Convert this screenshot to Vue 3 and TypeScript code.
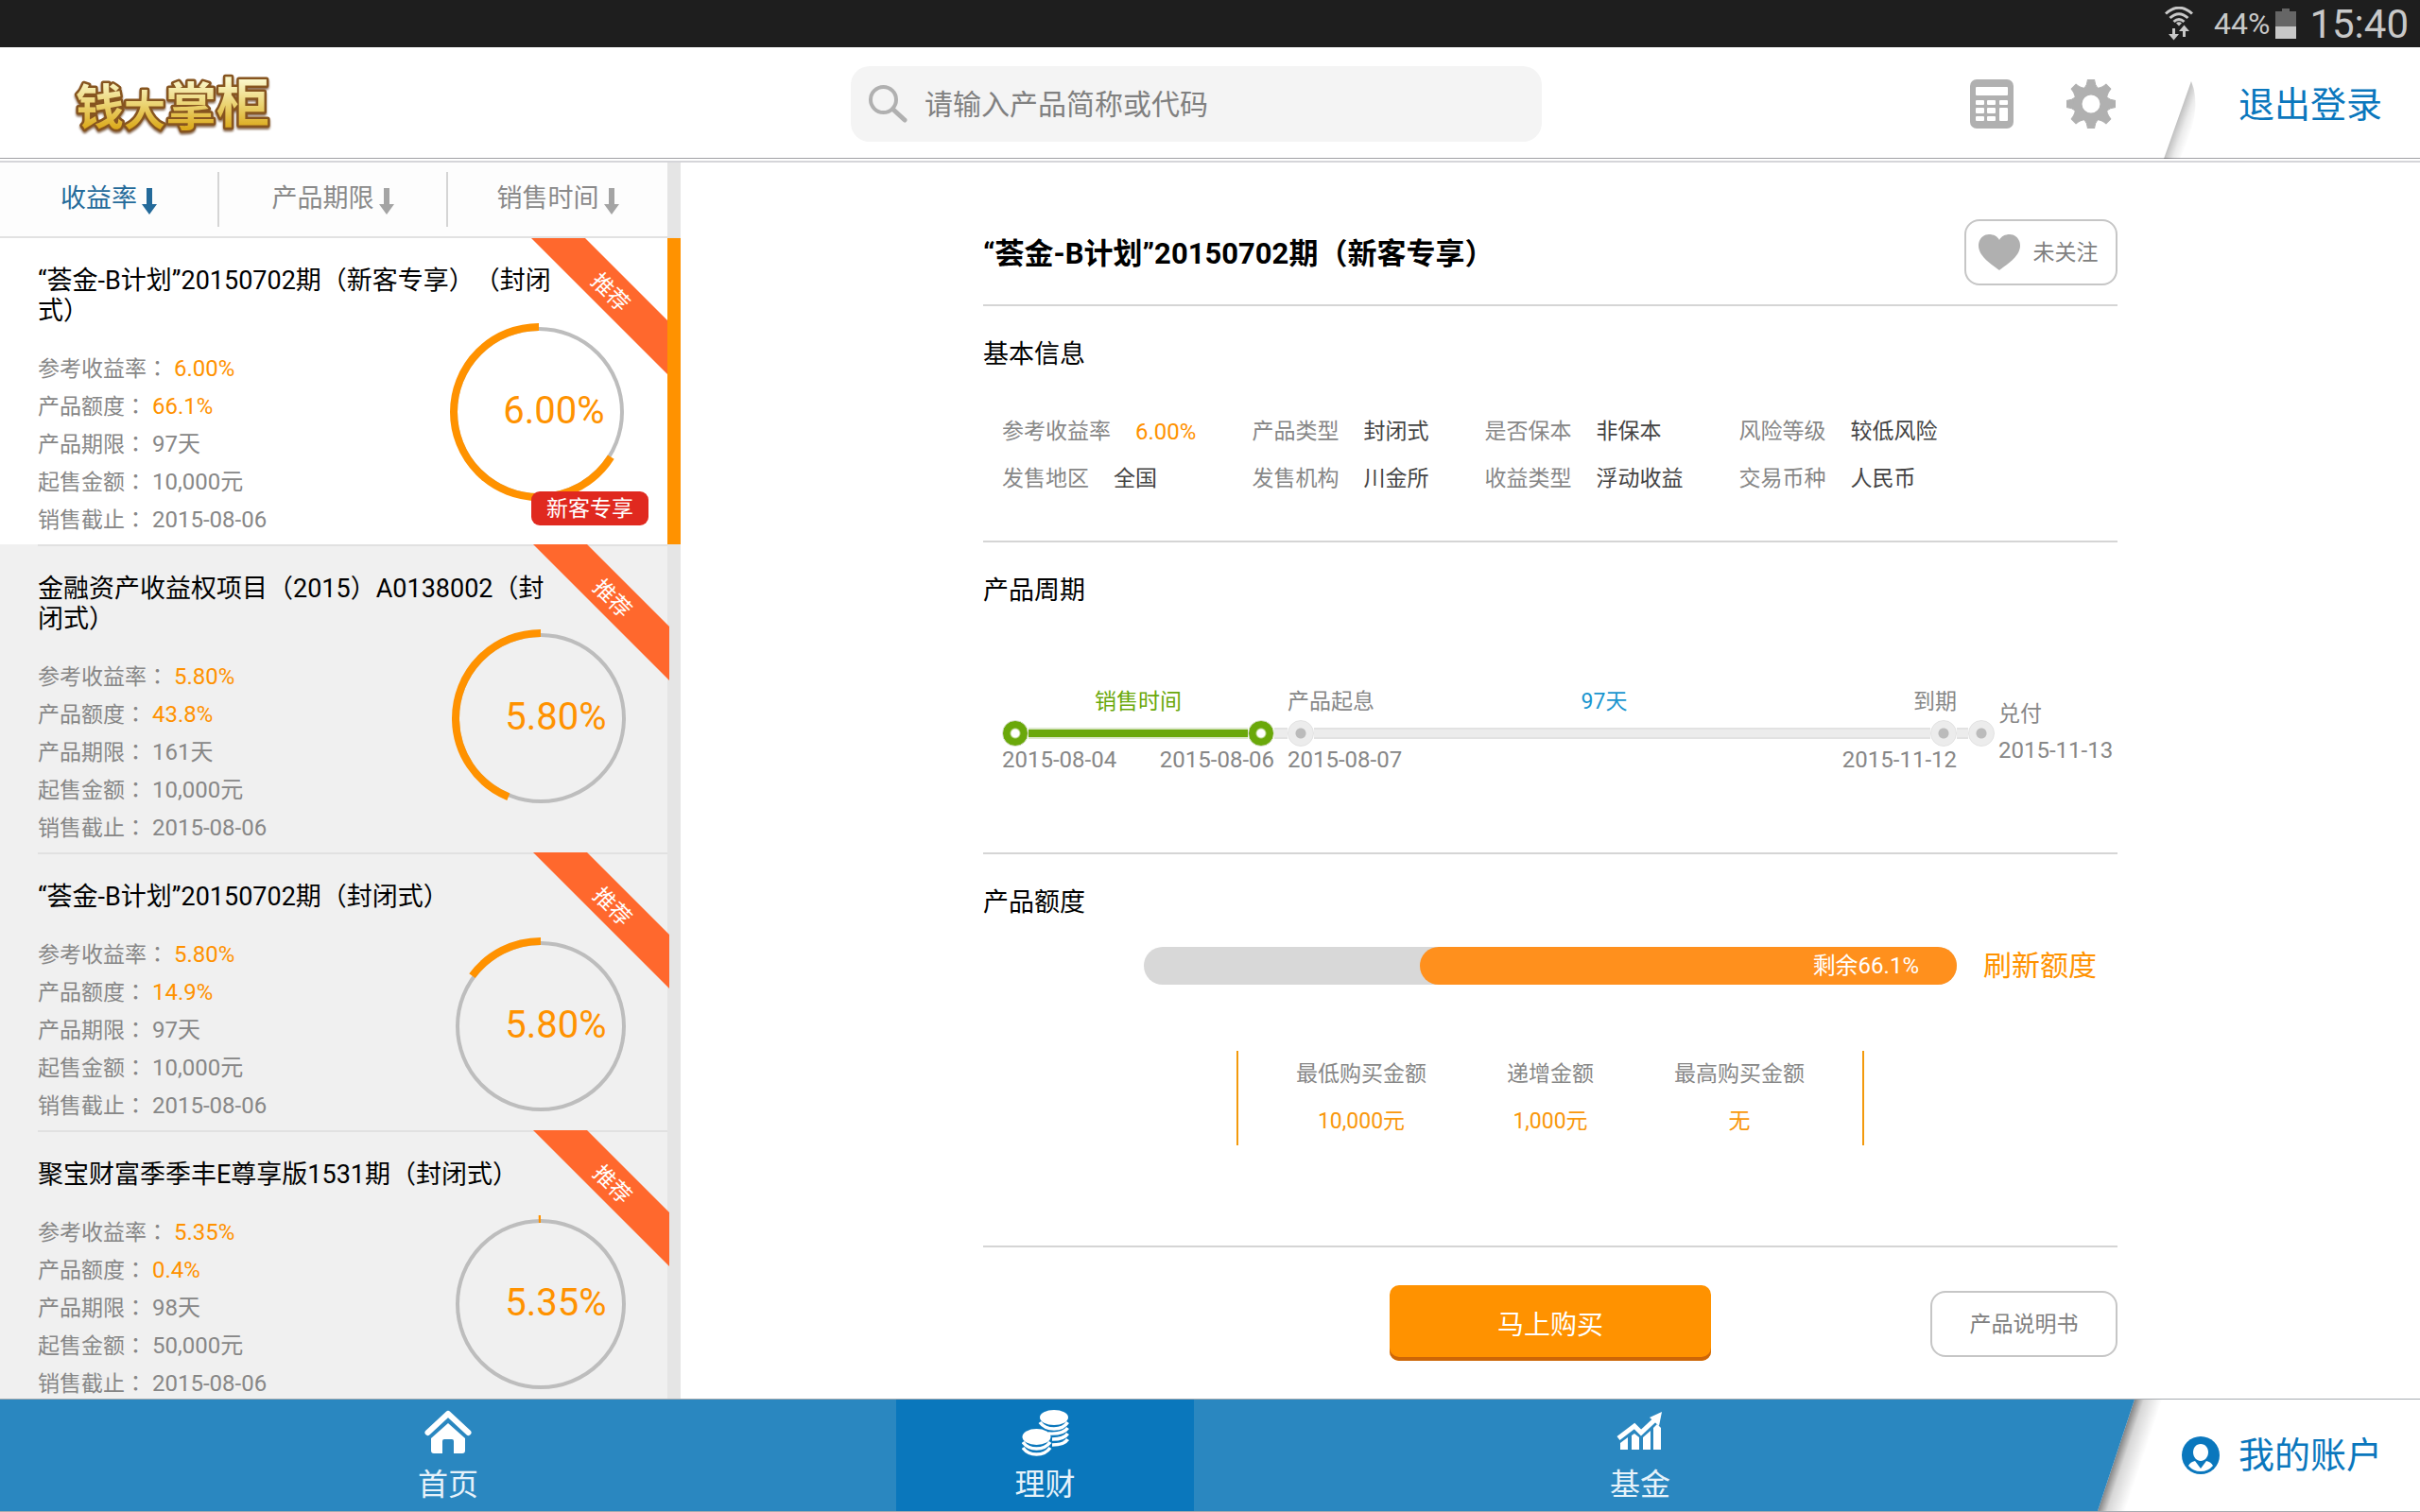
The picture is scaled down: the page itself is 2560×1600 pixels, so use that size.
<script setup lang="ts">
import { ref } from 'vue'

interface Product {
  title: string
  rate: string
  quota: number
  term: string
  minimum: string
  deadline: string
  exclusive?: boolean
}

interface Fact {
  label: string
  value: string
  highlight?: boolean
}

const products: Product[] = [
  { title: '“荟金-B计划”20150702期（新客专享）（封闭式）', rate: '6.00%', quota: 66.1, term: '97天', minimum: '10,000元', deadline: '2015-08-06', exclusive: true },
  { title: '金融资产收益权项目（2015）A0138002（封闭式）', rate: '5.80%', quota: 43.8, term: '161天', minimum: '10,000元', deadline: '2015-08-06' },
  { title: '“荟金-B计划”20150702期（封闭式）', rate: '5.80%', quota: 14.9, term: '97天', minimum: '10,000元', deadline: '2015-08-06' },
  { title: '聚宝财富季季丰E尊享版1531期（封闭式）', rate: '5.35%', quota: 0.4, term: '98天', minimum: '50,000元', deadline: '2015-08-06' },
]

const sorts = ['收益率', '产品期限', '销售时间']
const activeSort = ref(0)
const selected = ref(0)
const keyword = ref('')

const specs = (p: Product): Fact[] => [
  { label: '参考收益率', value: p.rate, highlight: true },
  { label: '产品额度', value: `${p.quota}%`, highlight: true },
  { label: '产品期限', value: p.term },
  { label: '起售金额', value: p.minimum },
  { label: '销售截止', value: p.deadline },
]

const factColumns: Fact[][] = [
  [{ label: '参考收益率', value: '6.00%', highlight: true }, { label: '发售地区', value: '全国' }],
  [{ label: '产品类型', value: '封闭式' }, { label: '发售机构', value: '川金所' }],
  [{ label: '是否保本', value: '非保本' }, { label: '收益类型', value: '浮动收益' }],
  [{ label: '风险等级', value: '较低风险' }, { label: '交易币种', value: '人民币' }],
]

const limits: Fact[] = [
  { label: '最低购买金额', value: '10,000元' },
  { label: '递增金额', value: '1,000元' },
  { label: '最高购买金额', value: '无' },
]

const remaining = 66.1
const gearTeeth = [0, 45, 90, 135, 180, 225, 270, 315]
</script>

<template>
  <div class="app">
    <div class="status">
      <svg class="wifi" viewBox="0 0 30 36" aria-hidden="true">
        <g fill="none" stroke="#c8c8c8" stroke-width="3">
          <path d="M1 7.500Q15-5 29 7.500" />
          <path d="M5.500 12Q15 3.500 24.500 12" />
          <path d="M9.500 16Q15 11 20.500 16" />
        </g>
        <path d="M12 17.500Q15 15 18 17.500L15 20.500Z" fill="#c8c8c8" />
        <path d="M8 23h3v6h4l-5.500 6.500L4 29h4zM19 32h3v-6h4l-5.500-6.500L15 26h4z" fill="#c8c8c8" />
      </svg>
      <span class="charge">44%</span>
      <svg class="battery" viewBox="0 0 22 32" aria-hidden="true">
        <path d="M7 0h8v3h7v16H0V3h7z" fill="#666" />
        <path d="M0 19h22v13H0z" fill="#c8c8c8" />
      </svg>
      <span class="clock">15:40</span>
    </div>

    <header class="header">
      <svg class="logo" viewBox="0 0 220 100" role="img" aria-label="钱大掌柜">
        <defs>
          <linearGradient id="gold" x1="0" y1="0" x2="0" y2="1">
            <stop offset="0.25" stop-color="#faf6c8" />
            <stop offset="0.55" stop-color="#ebd372" />
            <stop offset="0.85" stop-color="#dba91a" />
          </linearGradient>
        </defs>
        <text x="6" y="72"><tspan font-size="51">钱</tspan><tspan font-size="44" dy="1">大</tspan><tspan font-size="54">掌</tspan><tspan font-size="56" dy="-4">柜</tspan></text>
      </svg>

      <label class="search">
        <svg viewBox="0 0 42 40" aria-hidden="true">
          <circle cx="16.500" cy="15.500" r="13.500" fill="none" stroke="#b0b0b0" stroke-width="4" />
          <path d="M26.500 25.500L39 37" stroke="#b0b0b0" stroke-width="5" stroke-linecap="round" />
        </svg>
        <input v-model="keyword" type="text" placeholder="请输入产品简称或代码" aria-label="搜索产品" />
      </label>

      <div class="tools">
        <button type="button" aria-label="计算器">
          <svg width="46" height="52" viewBox="0 0 46 52">
            <rect width="46" height="52" rx="7" fill="#b0b0b0" />
            <g fill="#fff">
              <rect x="6" y="8" width="34" height="9" rx="1" />
              <rect x="6" y="22" width="9" height="5" rx="1" /><rect x="18" y="22" width="9" height="5" rx="1" /><rect x="31" y="22" width="9" height="5" rx="1" />
              <rect x="6" y="30" width="9" height="6" rx="1" /><rect x="18" y="30" width="9" height="6" rx="1" />
              <rect x="6" y="39" width="9" height="5" rx="1" /><rect x="18" y="39" width="9" height="5" rx="1" />
              <rect x="31" y="30" width="9" height="14" rx="1" />
            </g>
          </svg>
        </button>
        <button type="button" aria-label="设置">
          <svg width="52" height="52" viewBox="-26 -26 52 52">
            <g fill="#b0b0b0">
              <path v-for="a in gearTeeth" :key="a" :transform="`rotate(${a})`" d="M-7.500-16Q-4-20-3.500-26H3.500Q4-20 7.500-16Z" stroke="#b0b0b0" stroke-linejoin="round" />
            </g>
            <circle r="14" fill="none" stroke="#b0b0b0" stroke-width="9" />
          </svg>
        </button>
      </div>
      <svg class="fold" viewBox="0 0 50 118" aria-hidden="true">
        <defs>
          <linearGradient id="fold" gradientUnits="userSpaceOnUse" x1="14" y1="78" x2="31" y2="84">
            <stop offset="0" stop-color="#000" stop-opacity="0.25" />
            <stop offset="0.5" stop-color="#000" stop-opacity="0.08" />
            <stop offset="1" stop-color="#000" stop-opacity="0" />
          </linearGradient>
        </defs>
        <path d="M0 118L29 36Q42 66 17 118Z" fill="url(#fold)" />
      </svg>
      <button type="button" class="logout">退出登录</button>
    </header>

    <div class="body">
      <aside class="side">
        <div class="sorts">
          <button v-for="(s, i) in sorts" :key="s" type="button" :class="{ on: i === activeSort }" @click="activeSort = i">
            <span>{{ s }}</span>
            <svg viewBox="0 0 16 28" aria-hidden="true"><path d="M5 0h6v17h5L8 28 0 17h5z" fill="currentColor" /></svg>
          </button>
        </div>
        <div class="list">
          <article v-for="(p, i) in products" :key="p.title" class="card" :class="{ selected: i === selected }" @click="selected = i">
            <div class="summary">
              <h3>{{ p.title }}</h3>
              <dl>
                <div v-for="s in specs(p)" :key="s.label">
                  <dt>{{ s.label }}<span class="colon">：</span></dt>
                  <dd :class="{ hot: s.highlight }">{{ s.value }}</dd>
                </div>
              </dl>
            </div>
            <div class="gauge">
              <svg viewBox="-94 -94 188 188" aria-hidden="true">
                <circle r="88" fill="none" stroke="#bdbdbd" stroke-width="4" />
                <circle r="90" fill="none" stroke="#ff9200" stroke-width="8" pathLength="100" :stroke-dasharray="`${p.quota} 100`" transform="scale(-1 1) rotate(-90)" />
              </svg>
              <span>{{ p.rate }}</span>
            </div>
            <div class="ribbon"><span>推荐</span></div>
            <span v-if="p.exclusive" class="badge">新客专享</span>
          </article>
        </div>
      </aside>

      <main class="main">
        <div class="detail">
          <div class="heading">
            <h1>“荟金-B计划”20150702期（新客专享）</h1>
            <button type="button" class="outline follow">
              <svg viewBox="0 0 44 38" aria-hidden="true"><path d="M22 38C16 33 0 24 0 12C0 5 5 0 11 0C16 0 20 2 22 6C24 2 28 0 33 0C39 0 44 5 44 12C44 24 28 33 22 38Z" fill="#b0b0b0" /></svg>
              <span>未关注</span>
            </button>
          </div>

          <section class="basic">
            <h2>基本信息</h2>
            <div class="facts">
              <dl v-for="(col, i) in factColumns" :key="i">
                <div v-for="f in col" :key="f.label">
                  <dt>{{ f.label }}</dt>
                  <dd :class="{ hot: f.highlight }">{{ f.value }}</dd>
                </div>
              </dl>
            </div>
          </section>

          <section class="cycle">
            <h2>产品周期</h2>
            <div class="timeline">
              <div class="stage sale">
                <div class="labels"><span>销售时间</span></div>
                <div class="track"><i class="dot" /><i class="line" /><i class="dot" /></div>
                <div class="dates"><span>2015-08-04</span><span>2015-08-06</span></div>
              </div>
              <i class="line" />
              <div class="stage term">
                <div class="labels"><span>产品起息</span><span class="days">97天</span><span>到期</span></div>
                <div class="track"><i class="dot" /><i class="line" /><i class="dot" /></div>
                <div class="dates"><span>2015-08-07</span><span>2015-11-12</span></div>
              </div>
              <i class="line" />
              <i class="dot" />
              <div class="payout"><span>兑付</span><span class="date">2015-11-13</span></div>
            </div>
          </section>

          <section class="quota">
            <h2>产品额度</h2>
            <div class="quota-row">
              <div class="bar"><div class="fill" :style="{ width: remaining + '%' }">剩余{{ remaining }}%</div></div>
              <button type="button" class="refresh">刷新额度</button>
            </div>
            <dl class="limits">
              <div v-for="l in limits" :key="l.label">
                <dt>{{ l.label }}</dt>
                <dd>{{ l.value }}</dd>
              </div>
            </dl>
          </section>

          <div class="actions">
            <button type="button" class="buy">马上购买</button>
            <button type="button" class="outline manual"><span>产品说明书</span></button>
          </div>
        </div>
      </main>
    </div>

    <nav class="nav">
      <a href="#home" class="home">
        <svg viewBox="0 0 50 50" aria-hidden="true">
          <path d="M3.500 25L25 5L46.500 25" fill="none" stroke="#fff" stroke-width="6" stroke-linecap="round" stroke-linejoin="round" />
          <path d="M25 15L43 31V44Q43 47 40 47H31V34Q31 32 29 32H21Q19 32 19 34V47H10Q7 47 7 44V31Z" fill="#fff" />
        </svg>
        <span>首页</span>
      </a>
      <a href="#wealth" class="current">
        <svg viewBox="0 0 50 50" aria-hidden="true">
          <ellipse cx="34" cy="9" rx="15" ry="8" fill="#fff" />
          <g fill="none" stroke="#fff" stroke-width="3.500">
            <path d="M19 14Q24 21 34 21T48.500 14" />
            <path d="M28 26Q44 27 48.500 20" />
            <path d="M32 32Q45 32 48.500 26" />
            <path d="M32 38Q45 38 48.500 32" />
          </g>
          <ellipse cx="15.500" cy="29.500" rx="15" ry="8.500" fill="#fff" />
          <g fill="none" stroke="#fff" stroke-width="3.500">
            <path d="M1 35Q6 42 15.500 42T30 35" />
            <path d="M1 41Q6 48 15.500 48T30 41" />
          </g>
        </svg>
        <span>理财</span>
      </a>
      <a href="#fund" class="fund">
        <svg viewBox="0 0 50 50" aria-hidden="true">
          <path d="M2 31L19 18L26 25L41 11" fill="none" stroke="#fff" stroke-width="5" />
          <path d="M48 3L35 9L45 18Z" fill="#fff" />
          <path d="M4 36L12 30V43H4ZM16 28L19 26L24 30V43H16ZM28 30L36 23V43H28ZM39 20L43 16L47 20V43H39Z" fill="#fff" />
        </svg>
        <span>基金</span>
      </a>
      <svg class="edge" viewBox="0 0 92 118" aria-hidden="true">
        <defs>
          <linearGradient id="edge" gradientUnits="userSpaceOnUse" x1="31" y1="59" x2="58" y2="68">
            <stop offset="0" stop-color="#000" stop-opacity="0.5" />
            <stop offset="0.35" stop-color="#000" stop-opacity="0.16" />
            <stop offset="1" stop-color="#000" stop-opacity="0" />
          </linearGradient>
        </defs>
        <path d="M0 0H92V118H0Z" fill="#fff" />
        <path d="M51 0H92V118H12Z" fill="url(#edge)" />
        <path d="M0 0H51L12 118H0Z" fill="#2a87c0" />
      </svg>
      <a href="#account" class="account">
        <svg viewBox="0 0 40 40" aria-hidden="true">
          <circle cx="20" cy="20" r="20" fill="#0a77bd" />
          <path d="M20 8C25 8 28 12 28 17C28 22 24 26 20 26C16 26 12 22 12 17C12 12 15 8 20 8Z" fill="#fff" />
          <path d="M7 31Q9 27 14 26L20 34L26 26Q31 27 33 31Q28 37 20 37Q12 37 7 31Z" fill="#fff" />
        </svg>
        <span>我的账户</span>
      </a>
    </nav>
  </div>
</template>

<style>
html,
body {
  background: #fff;
}
</style>

<style scoped>
* {
  box-sizing: border-box;
}

.app {
  display: flex;
  flex-direction: column;
  height: 100vh;
  overflow: hidden;
  background: #fff;
  color: #878787;
  font-family: Roboto, "Noto Sans CJK SC", sans-serif;
  font-size: 23px;
  text-spacing-trim: space-all;
}

h1, h2, h3, dl, dd {
  margin: 0;
  font-weight: 400;
}

button {
  border: 0;
  padding: 0;
  background: none;
  color: inherit;
  font: inherit;
  cursor: pointer;
}

a {
  color: inherit;
  text-decoration: none;
}

svg {
  display: block;
  flex: none;
}

/* Status bar */
.status {
  display: flex;
  flex: none;
  align-items: center;
  justify-content: flex-end;
  height: 50px;
  padding-right: 12px;
  background: #1e1e1e;
  color: #c8c8c8;
}

.wifi {
  width: 30px;
  height: 36px;
  margin-right: 22px;
}

.charge {
  margin-right: 6px;
  font-size: 32px;
}

.battery {
  width: 22px;
  height: 32px;
  margin-right: 14px;
}

.clock {
  font-size: 42px;
}

/* Header */
.header {
  display: grid;
  grid-template-columns: 900px minmax(0, 1fr) 607px 101px 221px;
  flex: none;
  align-items: center;
  height: 122px;
  border-bottom: 2px solid #d5d5d9;
  box-shadow: inset 0 -2px #fff, inset 0 -3px #a09fa4;
}

.logo {
  width: 220px;
  height: 100px;
  margin-left: 74px;
  filter: drop-shadow(0 2px 1px #8a6a50);
}

.logo text {
  fill: url(#gold);
  stroke: #86541f;
  stroke-width: 5px;
  stroke-linejoin: round;
  paint-order: stroke;
  font-family: "Noto Sans CJK SC", sans-serif;
  font-weight: 700;
}

.search {
  display: flex;
  align-items: center;
  height: 80px;
  padding: 0 18px;
  border-radius: 20px;
  background: #f4f4f4;
}

.search svg {
  width: 42px;
  height: 40px;
  margin-right: 18px;
}

.search input {
  flex: 1;
  min-width: 0;
  border: 0;
  padding: 0;
  outline: 0;
  background: none;
  color: #808080;
  font: inherit;
  font-size: 30px;
}

.search input::placeholder {
  color: #808080;
  opacity: 1;
}

.tools {
  display: flex;
  align-items: center;
  justify-content: flex-end;
  gap: 56px;
}

.fold {
  width: 50px;
  height: 118px;
  place-self: start end;
}

.logout {
  justify-self: end;
  margin-right: 40px;
  padding-bottom: 6px;
  color: #0a77bd;
  font-size: 38px;
}

/* Product list */
.body {
  display: grid;
  grid-template-columns: 720px minmax(0, 1fr);
  flex: 1;
  min-height: 0;
}

.side {
  display: flex;
  flex-direction: column;
  min-height: 0;
  background: #f0f0f0;
}

.sorts {
  display: grid;
  grid-template-columns: 232px 242px 232px;
  flex: none;
  align-items: center;
  height: 80px;
  border-right: 14px solid #e5e5e5;
  border-bottom: 2px solid #e2e2e2;
  background: #fdfdfd;
}

.sorts button {
  display: flex;
  align-items: center;
  justify-content: center;
  gap: 5px;
  height: 58px;
  border-right: 2px solid #d5d5d5;
  color: #8a8a8a;
  font-size: 27px;
}

.sorts button:last-child {
  border-right: 0;
}

.sorts button.on {
  color: #246a9a;
}

.sorts span {
  padding-bottom: 8px;
}

.sorts svg {
  width: 16px;
  height: 28px;
  margin-top: 4px;
}

.sorts button:not(.on) svg {
  color: #a4a4a4;
}

.list {
  flex: 1;
  min-height: 0;
  overflow-y: auto;
  scrollbar-width: none;
}

.card {
  position: relative;
  display: grid;
  padding: 0 40px 8px;
  border-right: 14px solid #e5e5e5;
  background: linear-gradient(#e1e1e1, #e1e1e1) 40px 0 / 100% 2px no-repeat #f0f0f0;
}

.card.selected {
  border-right-color: #ff9200;
  background: #fff;
}

.summary {
  grid-area: 1 / 1;
  padding-top: 31px;
}

.card:first-child .summary {
  padding-top: 29px;
}

.summary h3 {
  width: 560px;
  margin-bottom: 23px;
  color: #000;
  font-size: 27px;
  line-height: 32px;
}

.summary dl div {
  display: flex;
  align-items: baseline;
  height: 40px;
  line-height: 40px;
}

.summary dd {
  margin-left: 6px;
  font-size: 24px;
}

.colon {
  font-family: "Noto Sans CJK TC", sans-serif;
}

.hot {
  color: #ff9200;
}

.gauge {
  display: grid;
  grid-area: 1 / 1;
  place-items: center;
  place-self: start end;
  width: 188px;
  height: 188px;
  margin-top: 90px;
}

.card.selected .gauge {
  margin-right: 2px;
}

.gauge svg,
.gauge span {
  grid-area: 1 / 1;
}

.gauge svg {
  width: 188px;
  height: 188px;
}

.gauge span {
  padding: 0 0 4px 32px;
  color: #ff9200;
  font-size: 40px;
}

.ribbon {
  position: absolute;
  top: 0;
  right: -2px;
  display: grid;
  place-items: center;
  width: 144px;
  height: 144px;
  padding: 0 0 32px 25px;
  background: #ff682d;
  clip-path: polygon(0 0, 57px 0, 100% 87px, 100% 100%);
  color: #fff;
}

.card.selected .ribbon {
  right: 0;
}

.ribbon span {
  transform: rotate(45deg);
}

.badge {
  position: absolute;
  right: 20px;
  bottom: 20px;
  padding: 2px 16px 0;
  border-radius: 9px;
  background: #e0291f;
  color: #fff;
  line-height: 34px;
}

/* Product detail */
.main {
  display: flex;
  justify-content: center;
  min-width: 0;
}

.detail {
  width: 1200px;
}

.heading {
  display: flex;
  align-items: center;
  justify-content: space-between;
  height: 152px;
  padding-top: 40px;
  border-bottom: 2px solid #d5d5d5;
}

h1 {
  padding-bottom: 4px;
  color: #000;
  font-size: 31px;
  font-weight: 700;
}

.outline {
  display: flex;
  align-items: center;
  justify-content: center;
  height: 70px;
  border: 2px solid #c6c6c6;
  border-radius: 16px;
  color: #808080;
}

.outline span {
  padding-bottom: 4px;
}

.follow {
  gap: 14px;
  width: 162px;
  padding-right: 6px;
}

.follow svg {
  width: 44px;
  height: 38px;
}

section {
  padding-top: 31px;
  border-bottom: 2px solid #d5d5d5;
}

h2 {
  color: #000;
  font-size: 27px;
  line-height: 40px;
}

.basic {
  padding-bottom: 40px;
}

.facts {
  display: flex;
  gap: 59px;
  margin-top: 37px;
  padding-left: 20px;
  line-height: 50px;
}

.facts dl div {
  display: flex;
  gap: 26px;
  height: 50px;
}

.facts dd {
  color: #444;
}

.facts dd.hot {
  color: #ff9200;
  font-size: 24px;
}

.cycle {
  padding-bottom: 84px;
}

.timeline {
  display: grid;
  grid-template-columns: 288px 14px minmax(0, 1fr) 12px 28px 130px;
  align-items: center;
  margin-top: 77px;
  padding-left: 20px;
}

.stage {
  display: grid;
  grid-template-rows: 40px 28px 28px;
}

.timeline > .line,
.timeline > .dot {
  margin-top: 12px;
}

.labels,
.dates,
.track {
  display: flex;
  align-items: center;
  justify-content: space-between;
}

.labels {
  padding-bottom: 5px;
}

.dates,
.date {
  font-size: 24px;
}

.sale .labels {
  justify-content: center;
  color: #6aa80a;
}

.days {
  flex: 1;
  padding-right: 84px;
  color: #1a96cf;
  text-align: center;
}

.line {
  flex: 1;
  height: 12px;
  border: solid #e2e2e2;
  border-width: 2px 0;
  background: #ececec;
}

.dot {
  flex: none;
  width: 28px;
  height: 28px;
  border: 1px solid #e2e2e2;
  border-radius: 50%;
  background: radial-gradient(circle, #bbb 5px, #ececec 6px);
}

.sale .line {
  border-color: #dde8cc;
  background: #6aa80a;
}

.sale .dot {
  border: 1px solid #d5ddc8;
  background: radial-gradient(circle, #fff 4px, #6aa80a 6px);
}

.payout {
  display: grid;
  margin-top: 10px;
  padding-left: 4px;
  line-height: 38px;
}

.quota {
  padding-bottom: 106px;
}

.quota-row {
  display: flex;
  align-items: center;
  gap: 28px;
  margin-top: 27px;
  padding-left: 170px;
}

.bar {
  display: flex;
  justify-content: flex-end;
  width: 860px;
  height: 40px;
  border-radius: 20px;
  background: #d8d8d8;
}

.fill {
  padding-right: 40px;
  border-radius: 20px;
  background: #ff901d;
  color: #fff;
  font-size: 24px;
  line-height: 40px;
  text-align: right;
}

.refresh {
  color: #ff9200;
  font-size: 30px;
  line-height: 40px;
}

.limits {
  display: grid;
  grid-template-columns: repeat(3, 200px);
  width: 664px;
  margin: 70px auto 0;
  padding: 0 30px;
  border: solid #f39a0c;
  border-width: 0 2px;
  line-height: 50px;
  text-align: center;
}

.limits dd {
  color: #f9980c;
}

.actions {
  display: grid;
  grid-template-columns: 1fr 340px 1fr;
  align-items: center;
  padding-top: 40px;
}

.buy {
  grid-column: 2;
  height: 80px;
  border-radius: 10px;
  background: #ff9200;
  box-shadow: inset 0 -4px #cd6607;
  color: #fff;
  font-size: 28px;
}

.manual {
  justify-self: end;
  width: 198px;
  margin-top: 2px;
}

/* Bottom navigation */
.nav {
  display: flex;
  flex: none;
  height: 120px;
  border-top: 1px solid #a5abb0;
  border-bottom: 1px solid #a5abb0;
  background: #fff;
}

.nav > a {
  display: flex;
  flex-direction: column;
  align-items: center;
  padding-top: 10px;
  background: #2a87c0;
  color: #e6f2fa;
  font-size: 32px;
  line-height: 40px;
}

.nav > a svg {
  width: 50px;
  height: 50px;
  margin-bottom: 10px;
}

.nav > .home {
  flex: 948;
}

.nav > .current {
  flex: 315;
  background: #0a77bc;
}

.nav > .fund {
  flex: 944;
}

.edge {
  width: 92px;
  height: 118px;
}

.nav > .account {
  flex: none;
  flex-direction: row;
  justify-content: flex-end;
  gap: 20px;
  width: 261px;
  padding: 0 40px 0 0;
  background: #fff;
  color: #0a77bd;
  font-size: 38px;
}

.nav > .account svg {
  width: 40px;
  height: 40px;
  margin: 0;
}
</style>
